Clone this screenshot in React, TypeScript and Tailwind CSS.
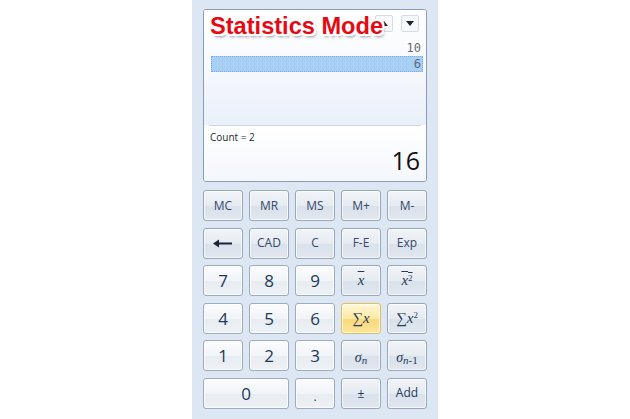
import type { ReactNode } from 'react';

type Variant = 'num' | 'fn' | 'hot';

const variantClass: Record<Variant, string> = {
  num: 'bg-[linear-gradient(to_bottom,#fbfcfd_0%,#f1f4f8_50%,#e7ecf2_51%,#eef2f6_100%)] border-[#9eacbf]',
  fn: 'bg-[linear-gradient(to_bottom,#f1f4f8_0%,#e6ebf2_50%,#d9e1eb_51%,#e0e7ef_100%)] border-[#98a7bb]',
  hot: 'bg-[linear-gradient(to_bottom,#fff6d3_0%,#feeaa6_50%,#fcd877_51%,#fde59d_100%)] border-[#e3bf5c]',
};

function Btn({
  children,
  variant = 'fn',
  className = '',
}: {
  children: ReactNode;
  variant?: Variant;
  className?: string;
}) {
  return (
    <div
      className={`flex items-center justify-center rounded-[3px] border text-[#1f3556] shadow-[inset_0_0_0_1px_rgba(255,255,255,0.7)] ${variantClass[variant]} ${className}`}
    >
      {children}
    </div>
  );
}

function Mem({ label }: { label: string }) {
  return (
    <Btn>
      <span className="text-[12px] text-[#36486a]">{label}</span>
    </Btn>
  );
}

function Digit({ d, className = '' }: { d: string; className?: string }) {
  return (
    <Btn variant="num" className={className}>
      <span className="text-[17px] leading-none text-[#22385a]">{d}</span>
    </Btn>
  );
}

function Math({ children, variant = 'fn' }: { children: ReactNode; variant?: Variant }) {
  return (
    <Btn variant={variant}>
      <span className="font-['Liberation_Serif',serif] text-[15px] leading-none text-[#253a5c]">
        {children}
      </span>
    </Btn>
  );
}

function Display() {
  return (
    <div className="relative flex h-[173px] flex-col overflow-hidden rounded-[3px] border border-[#8b9db6] bg-white">
      {/* history area */}
      <div className="flex h-[115px] flex-col bg-[linear-gradient(to_bottom,#ffffff_0%,#f7f9fd_50%,#e9f0f9_100%)]">
        <div className="flex justify-end gap-[8px] pr-[7px] pt-[5px]">
          <div className="flex h-[17px] w-[18px] items-center justify-center rounded-[2px] border border-[#d3dbe6] bg-[#f7f9fc]">
            <svg width="8" height="5" viewBox="0 0 8 5">
              <path d="M0 5 L4 0 L8 5 Z" fill="#1d2533" />
            </svg>
          </div>
          <div className="flex h-[17px] w-[18px] items-center justify-center rounded-[2px] border border-[#d3dbe6] bg-[#f7f9fc]">
            <svg width="8" height="5" viewBox="0 0 8 5">
              <path d="M0 0 L8 0 L4 5 Z" fill="#1d2533" />
            </svg>
          </div>
        </div>
        <div className="mt-[8px] pl-[7px] pr-[3px] font-['DejaVu_Sans_Mono',monospace] text-[12px] text-[#6b6b6b]">
          <div className="flex h-[16px] items-center justify-end pr-[2px]">10</div>
          <div className="flex h-[16px] items-center justify-end border border-dotted border-[#7ea9da] bg-[#a8cff4] pr-[1px] text-[#5a6b80]">
            6
          </div>
        </div>
      </div>
      <div className="mx-[5px] h-px bg-[#cdd6e2]" />
      {/* result area */}
      <div className="flex flex-1 flex-col bg-[linear-gradient(to_bottom,#ffffff_0%,#f4f7fc_100%)] px-[6px] pt-[5px]">
        <div className="text-[10px] leading-[12px] text-[#2a2a2a]">Count = 2</div>
        <div className="mt-[3px] text-right text-[25px] leading-[28px] text-[#111]">16</div>
      </div>

      {/* annotation */}
      <div className="absolute left-[6px] top-[4px] font-['Liberation_Sans',Arial,sans-serif] text-[23.6px] font-bold leading-[24px] text-[#e50914] [text-shadow:-2px_-2px_0_#fff,2px_-2px_0_#fff,-2px_2px_0_#fff,2px_2px_0_#fff,0_-2px_0_#fff,0_2px_0_#fff,-2px_0_0_#fff,2px_0_0_#fff,2px_3px_3px_rgba(0,0,0,0.45)]">
        Statistics Mode
      </div>
    </div>
  );
}

export default function App() {
  return (
    <div className="flex h-[419px] w-[630px] justify-center bg-white font-['Open_Sans',sans-serif]">
      <div className="flex h-full w-[246px] flex-col bg-[#dde7f3] px-[11px] pt-[9px]">
        <Display />

        <div className="mt-[8px] grid grid-cols-5 auto-rows-[31px] gap-x-[6px] gap-y-[6.5px]">
          <Mem label="MC" />
          <Mem label="MR" />
          <Mem label="MS" />
          <Mem label="M+" />
          <Mem label="M-" />

          <Btn>
            <svg width="20" height="9" viewBox="0 0 20 9">
              <path d="M5 4.5 H19" stroke="#1b2638" strokeWidth="2" />
              <path d="M0 4.5 L6 0.5 L6 8.5 Z" fill="#1b2638" />
            </svg>
          </Btn>
          <Mem label="CAD" />
          <Mem label="C" />
          <Mem label="F-E" />
          <Mem label="Exp" />

          <Digit d="7" />
          <Digit d="8" />
          <Digit d="9" />
          <Math>
            <i className="overline">x</i>
          </Math>
          <Math>
            <span className="overline">
              <i>x</i>
              <sup className="text-[9px]">2</sup>
            </span>
          </Math>

          <Digit d="4" />
          <Digit d="5" />
          <Digit d="6" />
          <Math variant="hot">
            ∑<i>x</i>
          </Math>
          <Math>
            ∑<i>x</i>
            <sup className="text-[9px]">2</sup>
          </Math>

          <Digit d="1" />
          <Digit d="2" />
          <Digit d="3" />
          <Btn>
            <span className="pt-[4px] font-['Liberation_Serif',serif] text-[14px] leading-none text-[#253a5c]">
              <i>σ</i>
              <sub className="text-[11px]">
                <i>n</i>
              </sub>
            </span>
          </Btn>
          <Btn>
            <span className="pt-[4px] font-['Liberation_Serif',serif] text-[14px] leading-none text-[#253a5c]">
              <i>σ</i>
              <sub className="text-[11px]">
                <i>n</i>-1
              </sub>
            </span>
          </Btn>

          <Digit d="0" className="col-span-2" />
          <Btn variant="num">
            <span className="pt-[8px] text-[12px] leading-none text-[#22385a]">.</span>
          </Btn>
          <Btn>
            <span className="pt-[2px] text-[12px] leading-none text-[#22385a]">±</span>
          </Btn>
          <Btn>
            <span className="text-[12px] text-[#22385a]">Add</span>
          </Btn>
        </div>
      </div>
    </div>
  );
}
